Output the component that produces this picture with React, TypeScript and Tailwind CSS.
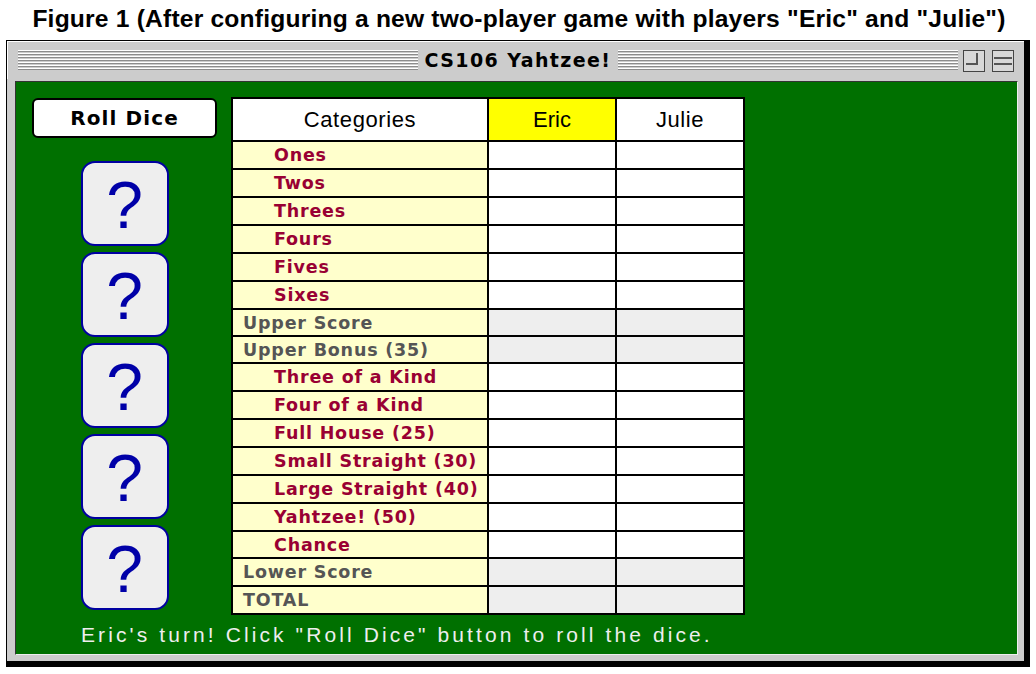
import React from "react";

type Row = { label: string; kind: "cat" | "sum"; h: string };

const rows: Row[] = [
  { label: "Ones", kind: "cat", h: "h-[28px]" },
  { label: "Twos", kind: "cat", h: "h-[28px]" },
  { label: "Threes", kind: "cat", h: "h-[28px]" },
  { label: "Fours", kind: "cat", h: "h-[28px]" },
  { label: "Fives", kind: "cat", h: "h-[28px]" },
  { label: "Sixes", kind: "cat", h: "h-[28px]" },
  { label: "Upper Score", kind: "sum", h: "h-[27px]" },
  { label: "Upper Bonus (35)", kind: "sum", h: "h-[27px]" },
  { label: "Three of a Kind", kind: "cat", h: "h-[28px]" },
  { label: "Four of a Kind", kind: "cat", h: "h-[28px]" },
  { label: "Full House (25)", kind: "cat", h: "h-[28px]" },
  { label: "Small Straight (30)", kind: "cat", h: "h-[28px]" },
  { label: "Large Straight (40)", kind: "cat", h: "h-[28px]" },
  { label: "Yahtzee! (50)", kind: "cat", h: "h-[28px]" },
  { label: "Chance", kind: "cat", h: "h-[27px]" },
  { label: "Lower Score", kind: "sum", h: "h-[28px]" },
  { label: "TOTAL", kind: "sum", h: "h-[26px]" },
];

const stripes =
  "bg-[repeating-linear-gradient(to_bottom,#ffffff_0px,#ffffff_1px,#8c8c8c_1px,#8c8c8c_2px,#cccccc_2px,#cccccc_3px)]";

function Die() {
  return (
    <div className="w-[88px] h-[85px] rounded-[14px] border-2 border-[#0000a0] bg-[#eeeeee] flex items-center justify-center">
      <span className="text-[#0000a8] text-[66px] leading-none font-['Liberation_Sans',sans-serif] mt-[2px]">?</span>
    </div>
  );
}

export default function App() {
  return (
    <div className="w-[1036px] h-[674px] bg-white overflow-hidden">
      <div className="h-[40px] flex items-center justify-center pb-[2px] pl-[2px]">
        <span className="font-['Liberation_Sans',Arial,sans-serif] font-bold text-[24.6px] leading-none text-black tracking-[0.2px] whitespace-nowrap">
          Figure 1 (After configuring a new two-player game with players "Eric" and "Julie")
        </span>
      </div>
      <div className="ml-[6px] w-[1024px] h-[627px] border-l border-t border-black border-r-[6px] border-b-[6px] bg-[#cccccc] flex flex-col">
        {/* title bar */}
        <div className="h-[38px] flex items-center pl-[10px] border-t border-l border-white">
          <div className={`w-[400px] h-[21px] ${stripes}`} />
          <span className="w-[200px] text-center font-['DejaVu_Sans',sans-serif] font-bold text-[19px] text-black tracking-[1.4px] leading-none">
            CS106 Yahtzee!
          </span>
          <div className={`w-[340px] h-[21px] ${stripes}`} />
          <div className="ml-[5px] w-[22px] h-[22px] border border-[#444] bg-[#d8d8d8] relative">
            <div className="absolute left-[2px] top-[2px] w-[12px] h-[12px] border-r-2 border-b-2 border-[#555]" />
          </div>
          <div className="ml-[7px] w-[22px] h-[22px] border border-[#444] bg-[#d8d8d8] flex flex-col justify-center gap-[4px] px-[1px]">
            <div className="h-[2px] bg-[#555]" />
            <div className="h-[2px] bg-[#555]" />
          </div>
        </div>
        {/* body frame */}
        <div className="flex-1 pl-[8px] pr-[6px] pb-[6px] pt-[2px]">
          <div className="w-full h-full bg-[#007000] border-t border-l border-[#333] border-r border-b border-r-[#eeeeee] border-b-[#eeeeee] flex flex-col">
            <div className="flex pl-[16px] pt-[15px]">
              <div className="w-[185px] flex flex-col items-center pt-[1px]">
                <div className="w-[185px] h-[40px] bg-white border-2 border-black rounded-[6px] flex items-center justify-center">
                  <span className="font-['DejaVu_Sans',sans-serif] font-bold text-[20px] text-black tracking-[1.1px]">Roll Dice</span>
                </div>
                <div className="mt-[23px] flex flex-col gap-[6px]">
                  <Die />
                  <Die />
                  <Die />
                  <Die />
                  <Die />
                </div>
              </div>
              <div className="ml-[14px] w-[514px] border-2 border-black flex flex-col bg-white">
                <div className="h-[43px] flex border-b-2 border-black">
                  <div className="w-[256px] border-r-2 border-black bg-white flex items-center justify-center">
                    <span className="font-['Liberation_Sans',sans-serif] text-[22px] text-black tracking-[0.6px]">Categories</span>
                  </div>
                  <div className="w-[128px] border-r-2 border-black bg-[#ffff00] flex items-center justify-center">
                    <span className="font-['Liberation_Sans',sans-serif] text-[22px] text-black">Eric</span>
                  </div>
                  <div className="w-[126px] bg-white flex items-center justify-center">
                    <span className="font-['Liberation_Sans',sans-serif] text-[22px] text-black tracking-[0.6px]">Julie</span>
                  </div>
                </div>
                {rows.map((r, i) => {
                  const last = i === rows.length - 1;
                  const cellBg = r.kind === "sum" ? "bg-[#eeeeee]" : "bg-white";
                  return (
                    <div key={r.label} className={`${r.h} flex ${last ? "" : "border-b-2 border-black"}`}>
                      <div
                        className={`w-[256px] border-r-2 border-black bg-[#ffffcc] flex items-center ${
                          r.kind === "cat" ? "pl-[41px] text-[#990033]" : "pl-[10px] text-[#555555]"
                        }`}
                      >
                        <span className="pt-[2px] font-['DejaVu_Sans',sans-serif] font-bold text-[17.5px] tracking-[0.8px] leading-none whitespace-nowrap">
                          {r.label}
                        </span>
                      </div>
                      <div className={`w-[128px] border-r-2 border-black ${cellBg}`} />
                      <div className={`w-[126px] ${cellBg}`} />
                    </div>
                  );
                })}
              </div>
            </div>
            <div className="pl-[65px] mt-[4px]">
              <span className="font-['Liberation_Sans',sans-serif] text-[21px] text-[#eeeeee] tracking-[3.1px] whitespace-nowrap">
                Eric's turn! Click "Roll Dice" button to roll the dice.
              </span>
            </div>
          </div>
        </div>
      </div>
    </div>
  );
}
